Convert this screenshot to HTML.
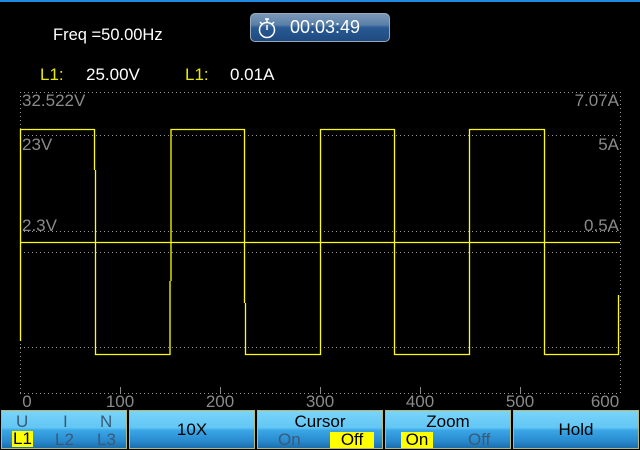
<!DOCTYPE html>
<html><head><meta charset="utf-8"><style>
*{margin:0;padding:0;box-sizing:border-box}
body{width:640px;height:449px;background:#000;position:relative;overflow:hidden;font-family:"Liberation Sans",sans-serif}
.t{position:absolute;white-space:nowrap}
.btn{position:absolute;top:410px;height:39px;border:1px solid #b8b870;background:linear-gradient(#7ad4fa 0%,#62c6f4 45%,#3aa6e6 52%,#2a8cd0 80%,#1c6eac 100%);color:#000;font-size:17px;text-align:center}
.g{color:#3a5a78}
.hl{background:#ff0;color:#000}
</style></head><body>
<div style="position:absolute;left:0;top:0;width:640px;height:2px;background:#1e88e5"></div>
<div class="t" style="left:53px;top:26px;color:#fff;font-size:16.5px">Freq =50.00Hz</div>
<div style="position:absolute;left:250px;top:13px;width:140px;height:29px;border:1px solid #9ab;border-radius:5px;background:linear-gradient(#7a98b8 0%,#5a80a8 40%,#2a5a94 50%,#1e4a80 100%)"></div>
<svg style="position:absolute;left:256px;top:16px" width="22" height="24" viewBox="0 0 22 24"><g fill="none" stroke="#fff" stroke-width="1.5"><circle cx="11" cy="14" r="7.5"/><path d="M11 14V9M9 3h4M11 3v3M4 6l2 2M18 6l-2 2"/></g></svg>
<div class="t" style="left:290px;top:17px;color:#fff;font-size:18px">00:03:49</div>
<div class="t" style="left:40px;top:65px;color:#e8e800;font-size:17px">L1:</div>
<div class="t" style="left:86px;top:65px;color:#fff;font-size:17px">25.00V</div>
<div class="t" style="left:185px;top:65px;color:#e8e800;font-size:17px">L1:</div>
<div class="t" style="left:230px;top:65px;color:#fff;font-size:17px">0.01A</div>
<svg style="position:absolute;left:0;top:0" width="640" height="410">
<g stroke="#999" stroke-width="1" stroke-dasharray="1,3" fill="none">
<path d="M20 92.5H620M20 135.5H620M20 231.5H620M20 252.5H620M20 347.5H620M20 393.5H620M20.5 92V393M620.5 92V393"/>
</g>
<g stroke="#888"><path d="M120.5 387v6M220.5 387v6M320.5 387v6M420.5 387v6M520.5 387v6"/></g>
<g stroke="#ff0" stroke-width="1.3" fill="none">
<path d="M20.5 341V129.5H94.5V170M95.5 170V354.5H170V281M171 281V129.5H244.5V303M245.5 303V354.5H320.5V129.5H394.5V354.5H469.5V129.5H544.5V354.5H618.5V295"/>
<path d="M21 242.5H620"/>
</g>
<g fill="#8a8a8a" font-family="Liberation Sans" font-size="17">
<text x="22" y="106">32.522V</text><text x="22" y="150">23V</text><text x="22" y="231">2.3V</text>
<text x="619" y="106" text-anchor="end">7.07A</text><text x="619" y="150" text-anchor="end">5A</text><text x="619" y="231" text-anchor="end">0.5A</text>
<text x="27" y="407" text-anchor="middle">0</text><text x="120" y="407" text-anchor="middle">100</text><text x="220" y="407" text-anchor="middle">200</text><text x="320" y="407" text-anchor="middle">300</text><text x="420" y="407" text-anchor="middle">400</text><text x="520" y="407" text-anchor="middle">500</text><text x="605" y="407" text-anchor="middle">600</text>
</g></svg>
<div class="btn" style="left:1px;width:126px">
<div class="t g" style="left:14px;top:1px">U</div><div class="t g" style="left:61px;top:1px">I</div><div class="t g" style="left:98px;top:1px">N</div>
<div class="t hl" style="left:10px;top:20px;padding:0 1px;line-height:16px">L1</div><div class="t g" style="left:53px;top:19px">L2</div><div class="t g" style="left:95px;top:19px">L3</div>
</div>
<div class="btn" style="left:129px;width:126px;line-height:37px">10X</div>
<div class="btn" style="left:257px;width:126px">
<div class="t" style="left:0;width:124px;top:1px">Cursor</div>
<div class="t g" style="left:20px;top:19px">On</div><div class="t hl" style="left:72px;top:21px;width:44px;line-height:16px">Off</div>
</div>
<div class="btn" style="left:385px;width:126px">
<div class="t" style="left:0;width:124px;top:1px">Zoom</div>
<div class="t hl" style="left:15px;top:21px;width:32px;line-height:16px">On</div><div class="t g" style="left:82px;top:19px">Off</div>
</div>
<div class="btn" style="left:513px;width:126px;line-height:37px">Hold</div>
</body></html>
